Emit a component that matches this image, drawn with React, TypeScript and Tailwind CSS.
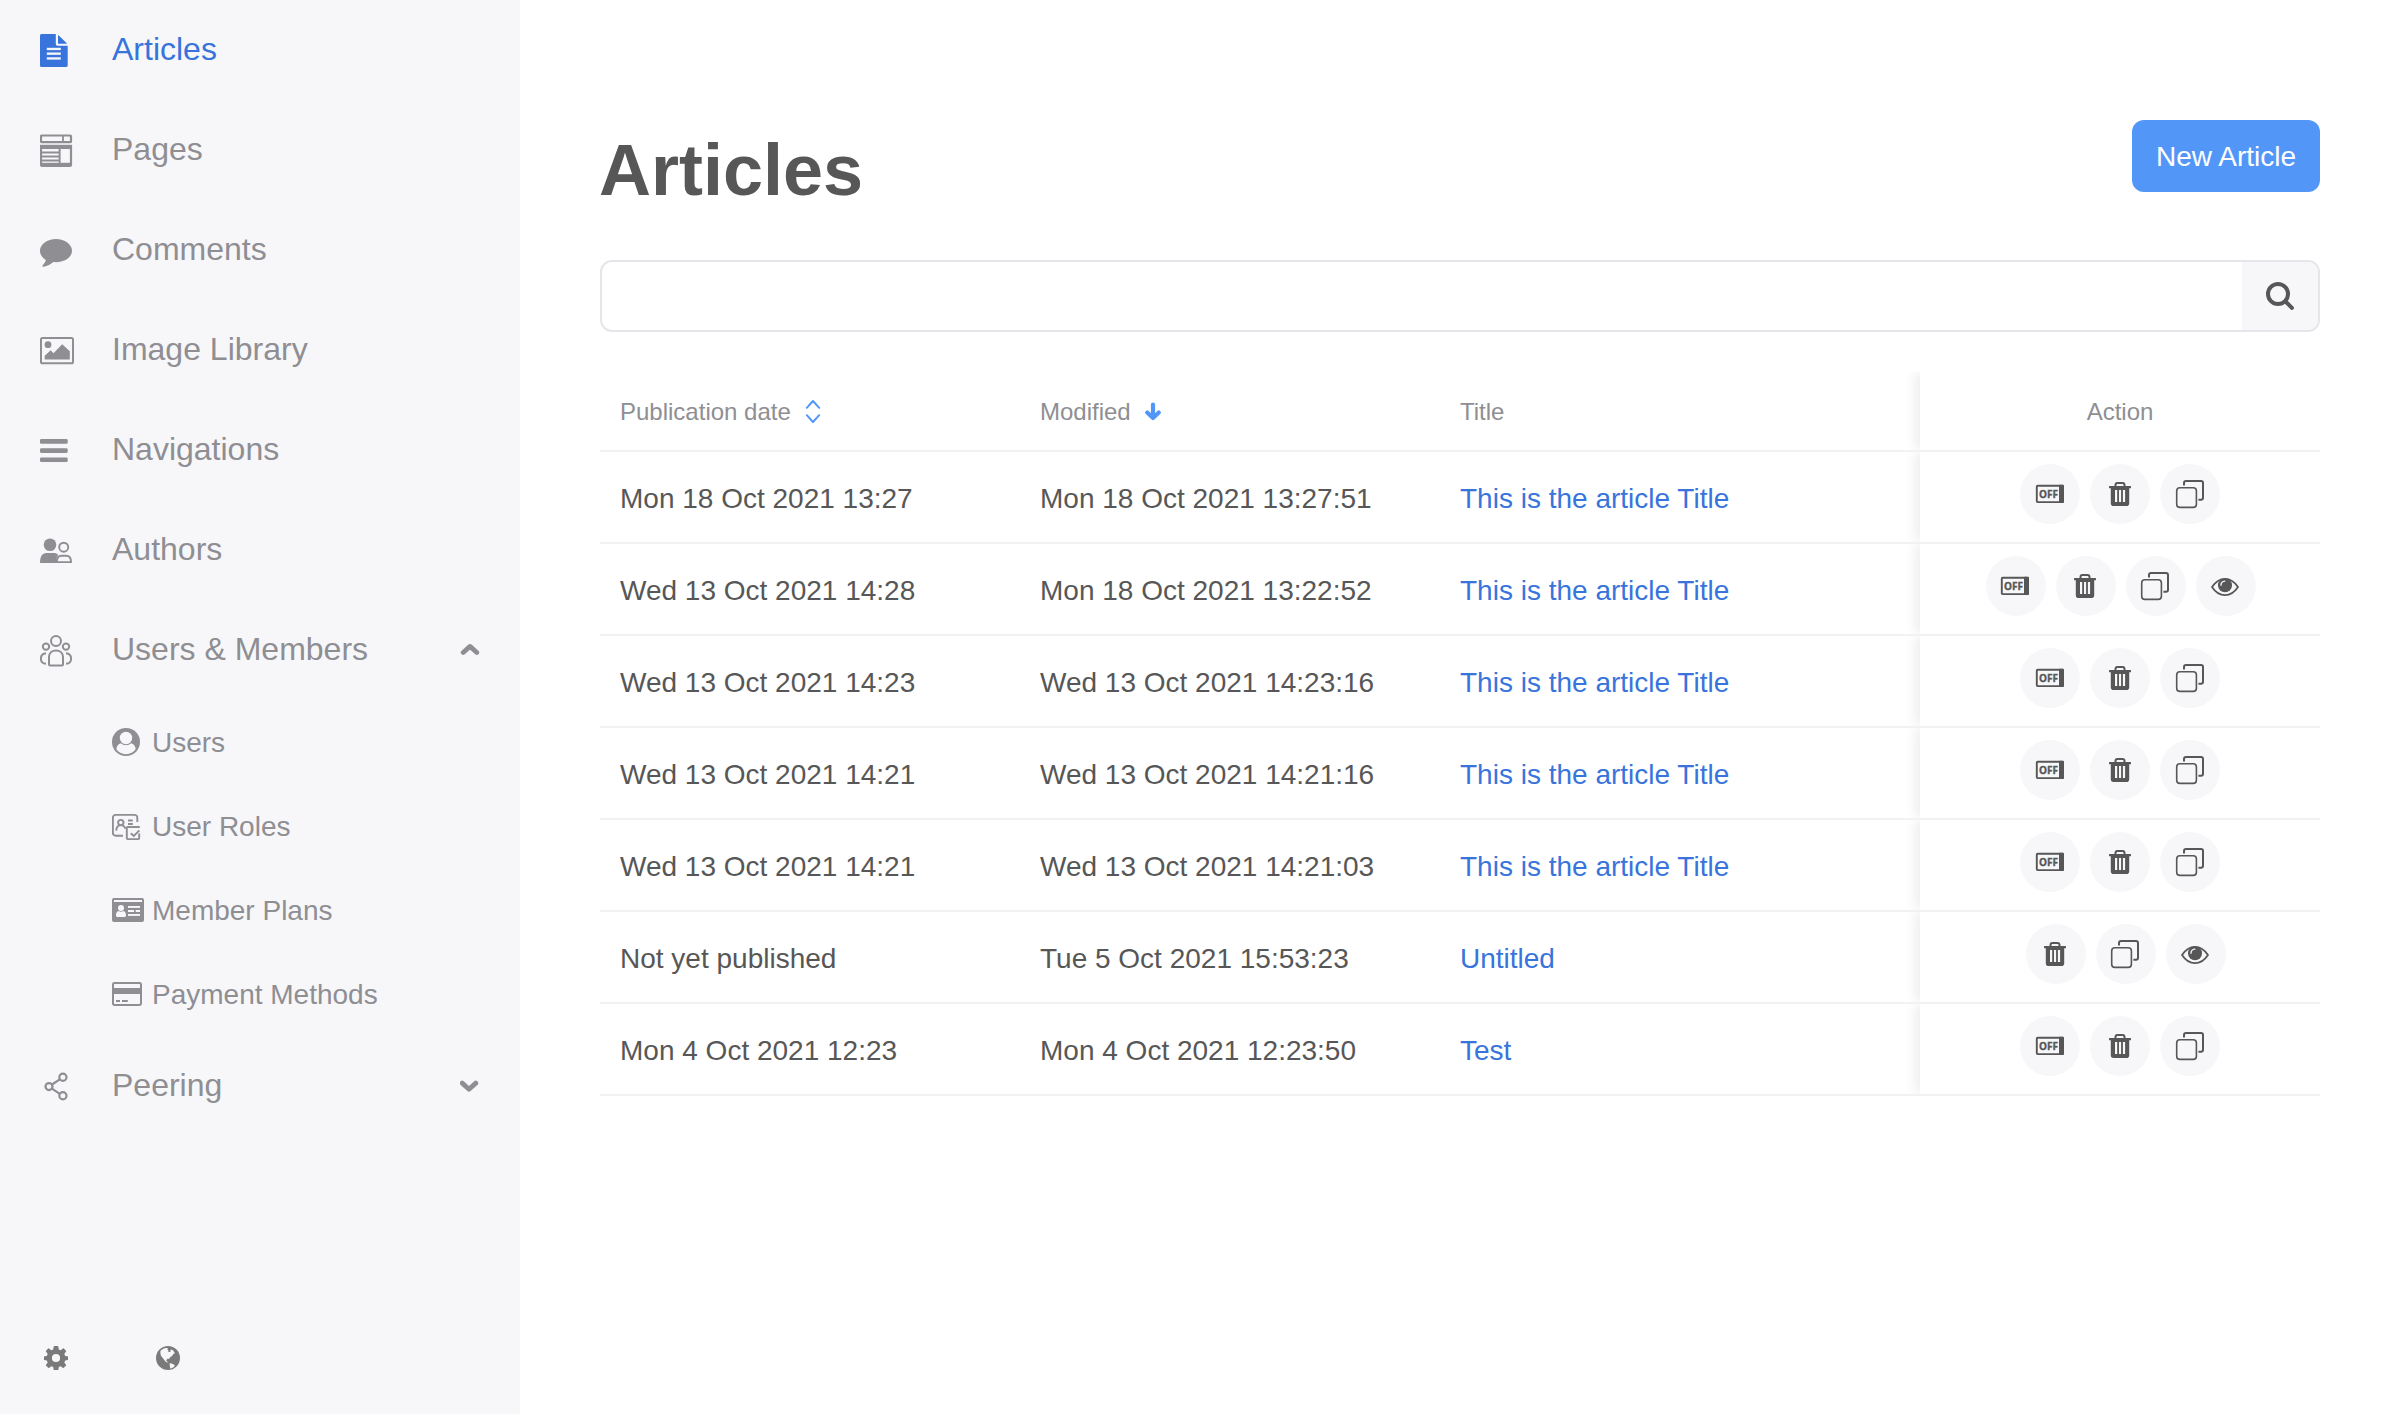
import type { ReactNode } from 'react';

type IconProps = { children: ReactNode; className?: string; size: string };

function Icon({ children, className = '', size }: IconProps) {
  return (
    <svg viewBox={size} className={`shrink-0 ${className}`} fill="currentColor" aria-hidden="true">
      {children}
    </svg>
  );
}

const line = { fill: 'none', stroke: 'currentColor' } as const;

/* Sidebar icons, drawn on a 36 unit grid */

const articleIcon = (
  <>
    <path d="M1.5 2h14.3v10a1.7 1.7 0 0 0 1.7 1.7H27.7v19.6A1.5 1.5 0 0 1 26.2 35H1.5A1.5 1.5 0 0 1 0 33.5V3.5A1.5 1.5 0 0 1 1.5 2z" />
    <path d="M18 3.2c.5.2.9.5 1.3.9l6.7 6.300c.4.4.7.8.9 1.300H18z" />
    <g fill="#f7f7fa">
      <rect x="6.800" y="15.800" width="14" height="2.300" />
      <rect x="6.800" y="20.500" width="14" height="2.300" />
      <rect x="6.800" y="25.300" width="14" height="2.300" />
    </g>
  </>
);

const pagesIcon = (
  <g {...line} strokeWidth="2.200">
    <rect x="1" y="3.500" width="30" height="6.700" rx="0.800" />
    <path d="M23 4v6" strokeWidth="1.800" />
    <path d="M1 13v20a.8.8 0 0 0 .8.8h28.400a.8.8 0 0 0 .8-.8V13" />
    <path d="M0 14.900h32" strokeWidth="4.200" />
    <path d="M1 32.500h30" strokeWidth="3.400" />
    <path d="M19.600 15v17M1 20.500h18M1 24.500h18M1 28.500h18" strokeWidth="2" />
  </g>
);

const commentIcon = (
  <path d="M16 7c8.800 0 16 5.200 16 11.700S24.800 30.200 16 30.200c-.9 0-1.800 0-2.600-.1-2.600 2.200-6 4.200-9.700 4.700-1 .1-1.900-.6-1-1.600 1.500-1.500 2.700-3 3.100-5.200C2.300 25.800 0 22.500 0 18.700 0 12.200 7.200 7 16 7z" />
);

const imageIcon = (
  <>
    <rect x="1" y="6" width="32" height="25.300" rx="1.600" {...line} strokeWidth="2" />
    <circle cx="8" cy="12.700" r="3.400" />
    <path d="M4.700 27.600v-3.800l6-5.600 2.800 3 8.700-9 7.600 7v8.400z" />
  </>
);

const barsIcon = (
  <>
    <rect y="7" width="27.700" height="4.700" rx="1.300" />
    <rect y="16.200" width="27.700" height="4.700" rx="1.300" />
    <rect y="25.400" width="27.700" height="4.700" rx="1.300" />
  </>
);

const authorsIcon = (
  <>
    <circle cx="10" cy="12.700" r="6.300" />
    <path d="M0 31c0-6.500 2.200-10 6.500-10h7c2 0 3.600.6 4.700 1.800-1.300 1.500-2 4-2 8.200z" />
    <circle cx="23.700" cy="15.200" r="4.500" {...line} strokeWidth="1.900" />
    <path d="M16.800 30.100c0-4.400 1.600-6.300 4.700-6.300h4.800c3.100 0 4.700 1.900 4.700 6.300z" {...line} strokeWidth="1.900" />
  </>
);

const membersIcon = (
  <g {...line} strokeWidth="2">
    <circle cx="16" cy="8.900" r="5" />
    <circle cx="6" cy="14.600" r="3.200" />
    <circle cx="26" cy="14.600" r="3.200" />
    <path d="M10 33.400c-.6 0-1-.4-1-1V25c0-4 3-6.500 7-6.500s7 2.500 7 6.500v7.400c0 .6-.4 1-1 1z" />
    <path d="M6 21.300C3 21.600.9 23.500.9 26.700c0 2.700 1.800 4.800 5.100 5.100M26 21.300c3 .3 5.100 2.200 5.100 5.400 0 2.700-1.800 4.800-5.100 5.100" />
  </g>
);

const shareIcon = (
  <g {...line} strokeWidth="2.200">
    <circle cx="9" cy="18.600" r="3.500" />
    <circle cx="22.900" cy="9.300" r="3.600" />
    <circle cx="22.900" cy="27.800" r="3.600" />
    <path d="M12 16.500l7.800-5.200M12 20.600l7.800 5.200" />
  </g>
);

/* Icons of the nested entries, drawn on a 40 x 32 grid */

const userIcon = (
  <>
    <circle cx="14" cy="16" r="14" />
    <g fill="#f7f7fa">
      <circle cx="14" cy="12" r="6.200" />
      <path d="M4.300 23c.5-2.900 1.900-5.300 4.600-5.800 1.400 1.300 3.100 2 5.100 2s3.700-.7 5.100-2c2.700.5 4.100 2.900 4.600 5.800-2 3.200-5.500 5.200-9.700 5.200S6.300 26.200 4.300 23z" />
    </g>
  </>
);

const rolesIcon = (
  <g {...line} strokeWidth="1.900">
    <path d="M11 25.700H3.600A2.700 2.700 0 0 1 .9 23V7.600a2.700 2.700 0 0 1 2.700-2.700h19a2.700 2.700 0 0 1 2.700 2.700V12" />
    <circle cx="8.800" cy="12.600" r="2.700" />
    <path d="M4.200 20.600c.2-2.900 1.400-4.700 3.300-5.200M10.300 15.400c1.900.5 2.600 1.700 3.200 3.200" />
    <path d="M16 10.500h4.800M16 14h4.800" />
    <path d="M27.800 17H15.600c-.5 0-.8.3-.8.8v10.500c0 .5.3.8.8.8h10.800c.5 0 .8-.3.800-.8V23.500" />
    <path d="M18.800 23.200l3 2.800 5.600-5.600" />
  </g>
);

const plansIcon = (
  <>
    <path
      fillRule="evenodd"
      d="M2 4h28a2 2 0 0 1 2 2v20a2 2 0 0 1-2 2H2a2 2 0 0 1-2-2V6a2 2 0 0 1 2-2zm0 2v2h28V6z"
    />
    <g fill="#f7f7fa">
      <circle cx="9" cy="14" r="3" />
      <path d="M4 21.500c0-2.600.8-4.300 2.700-4.600.7.5 1.400.8 2.300.8s1.600-.3 2.300-.8c1.900.3 2.700 2 2.700 4.600 0 .9-.6 1.500-1.500 1.500h-7C4.600 23 4 22.400 4 21.500z" />
      <rect x="16" y="12" width="12" height="1.900" />
      <path d="M16 16h6v1.900h-6zM23.700 16H28v1.900h-4.300z" />
      <rect x="16" y="20" width="12" height="1.900" />
    </g>
  </>
);

const paymentIcon = (
  <>
    <rect x="1" y="5" width="28" height="22" rx="1.400" {...line} strokeWidth="2" />
    <path d="M1 10h28v6H1zM4 22h4v1.900H4zM10 22h5.800v1.900H10z" />
  </>
);

type NavItem = { label: string; icon: ReactNode; active?: boolean; toggle?: 'up' | 'down'; children?: { label: string; icon: ReactNode }[] };

const nav: NavItem[] = [
  { label: 'Articles', icon: articleIcon, active: true },
  { label: 'Pages', icon: pagesIcon },
  { label: 'Comments', icon: commentIcon },
  { label: 'Image Library', icon: imageIcon },
  { label: 'Navigations', icon: barsIcon },
  { label: 'Authors', icon: authorsIcon },
  {
    label: 'Users & Members',
    icon: membersIcon,
    toggle: 'up',
    children: [
      { label: 'Users', icon: userIcon },
      { label: 'User Roles', icon: rolesIcon },
      { label: 'Member Plans', icon: plansIcon },
      { label: 'Payment Methods', icon: paymentIcon },
    ],
  },
  { label: 'Peering', icon: shareIcon, toggle: 'down' },
];

function Toggle({ direction }: { direction: 'up' | 'down' }) {
  return (
    <Icon size="0 0 20 14" className="h-[14px] w-5">
      <path
        d={direction === 'up' ? 'M3.200 9.500L10 3.400l6.800 6.100' : 'M2.200 4.100L9 10.200l6.800-6.100'}
        {...line}
        strokeWidth="4.800"
        strokeLinecap="round"
        strokeLinejoin="round"
      />
    </Icon>
  );
}

function Sidebar() {
  return (
    <aside className="flex w-[520px] shrink-0 flex-col justify-between bg-[#f7f7fa] text-[#8e8e93]">
      <nav>
        {nav.map((item) => (
          <div key={item.label}>
            <a className={`flex h-[100px] items-center pl-10 pr-10 ${item.active ? 'text-[#3874db]' : ''}`}>
              <Icon size="0 0 36 36" className="mr-9 size-9">
                {item.icon}
              </Icon>
              <span className="flex-1 pb-0.5 text-[32px] leading-10">{item.label}</span>
              {item.toggle && <Toggle direction={item.toggle} />}
            </a>
            {item.children?.map((child) => (
              <a key={child.label} className="flex h-[84px] items-center pl-28 text-[28px] leading-8">
                <Icon size="0 0 40 32" className="h-8 w-10">
                  {child.icon}
                </Icon>
                <span className="pt-0.5">{child.label}</span>
              </a>
            ))}
          </div>
        ))}
      </nav>
      <footer className="flex gap-[88px] pb-11 pl-11 text-[#7a7a7a]">
        <Icon size="0 0 24 24" className="size-6">
          <path
            fillRule="evenodd"
            d="M10.300 0h3.400c.3 0 .6.200.6.500l.5 2.900 1.900.8 2.300-1.700c.3-.2.600-.2.800.1l2.200 2.200c.2.200.2.500 0 .8l-1.700 2.300.9 2 2.400.4c.3 0 .4.300.4.600v2.600c0 .3-.1.600-.4.600l-2.400.4-.9 2 1.700 2.300c.2.300.2.600 0 .8l-2.200 2.200c-.2.200-.5.300-.8.100l-2.300-1.700-1.900.8-.5 2.900c0 .3-.3.500-.6.500h-3.400c-.3 0-.6-.2-.6-.5l-.5-2.900-1.900-.8L5 21.900c-.3.200-.6.200-.8-.1L2 19.600c-.2-.2-.2-.5 0-.8l1.700-2.300-.9-2-2.400-.4c-.3 0-.4-.3-.4-.6v-2.600c0-.3.100-.6.400-.6l2.400-.4.9-2L2 5.600c-.2-.3-.2-.6 0-.8l2.200-2.200c.2-.3.500-.3.800-.1l2.300 1.700 1.900-.8.5-2.900c0-.3.300-.5.600-.5zM12 7.900a4.100 4.100 0 1 0 0 8.200 4.100 4.100 0 0 0 0-8.200z"
          />
        </Icon>
        <Icon size="0 0 24 24" className="size-6">
          <circle cx="12" cy="12" r="12" />
          <g fill="#f7f7fa">
            <path d="M4.600 4.600C6 3.300 7.800 2.300 10 2l2.200.2-1 1.200 1.400.6-.8 1.200 1.400.9 1.600-.6-.5-1.400 1.400-.7 1.700 1.400 1.500 2.400-1.600.9-1.200 1.800-1.800 1-1 1.800-1.900.1-1.200 1.600 1.400 1.600-.3.800-1.800-1.200-2-2.500L5 9.800c-.6-1.700-.8-3.500-.4-5.200z" />
            <path d="M13.500 17.200l2.200.2 3 1.600-.7 2-3.700 1.800-.3-1.700z" />
          </g>
        </Icon>
      </footer>
    </aside>
  );
}

/* Row action icons, drawn on the full 60 unit button */

type Action = 'unpublish' | 'delete' | 'duplicate' | 'preview';

const actionIcons: Record<Action, ReactNode> = {
  unpublish: (
    <>
      <rect x="16.800" y="21.700" width="26" height="16.400" rx="0.800" {...line} strokeWidth="1.900" />
      <rect x="39" y="20.700" width="5" height="18.300" rx="0.800" />
      <text
        x="19"
        y="33.700"
        textLength="19"
        lengthAdjust="spacingAndGlyphs"
        stroke="currentColor"
        strokeWidth="0.350"
        className="font-['Open_Sans',sans-serif] text-[10.200px] font-bold"
      >
        OFF
      </text>
    </>
  ),
  delete: (
    <>
      <path d="M25.500 22.500v-1.600c0-1.100.8-1.900 1.900-1.900h5.200c1.100 0 1.900.8 1.900 1.900v1.600" {...line} strokeWidth="2" />
      <rect x="19" y="22" width="22" height="2.200" rx="0.500" />
      <path
        fillRule="evenodd"
        d="M20.800 24h18.400v15.200a2.800 2.800 0 0 1-2.800 2.800H23.600a2.800 2.800 0 0 1-2.800-2.800zM25 26v12h2.200V26zM29 26v12h2.100V26zM32.900 26v12h2.200V26z"
      />
    </>
  ),
  duplicate: (
    <g {...line}>
      <rect x="16.700" y="23.700" width="19.700" height="19.700" rx="3.200" strokeWidth="1.600" />
      <path d="M24 21.500v-2.500a2 2 0 0 1 2-2h15a2 2 0 0 1 2 2v14.800a2 2 0 0 1-2 2h-2.600" strokeWidth="2" />
    </g>
  ),
  preview: (
    <>
      <path d="M17 31c3.500-5.300 7.700-8.200 13-8.200S39.500 25.700 43 31c-3.500 5.300-7.700 8.200-13 8.200S20.500 36.300 17 31z" {...line} strokeWidth="1.800" strokeLinejoin="round" />
      <circle cx="30" cy="29.200" r="7" />
      <path d="M26 29.300c0-2.300 1.500-3.900 3.800-4.100" fill="none" stroke="#f7f7fa" strokeWidth="1.300" strokeLinecap="round" />
    </>
  ),
};

type Row = { published: string; modified: string; title: string; actions: Action[]; offset?: string };

const standard: Action[] = ['unpublish', 'delete', 'duplicate'];

const rows: Row[] = [
  { published: 'Mon 18 Oct 2021 13:27', modified: 'Mon 18 Oct 2021 13:27:51', title: 'This is the article Title', actions: standard },
  {
    published: 'Wed 13 Oct 2021 14:28',
    modified: 'Mon 18 Oct 2021 13:22:52',
    title: 'This is the article Title',
    actions: ['unpublish', 'delete', 'duplicate', 'preview'],
    offset: 'pl-0.5',
  },
  { published: 'Wed 13 Oct 2021 14:23', modified: 'Wed 13 Oct 2021 14:23:16', title: 'This is the article Title', actions: standard },
  { published: 'Wed 13 Oct 2021 14:21', modified: 'Wed 13 Oct 2021 14:21:16', title: 'This is the article Title', actions: standard },
  { published: 'Wed 13 Oct 2021 14:21', modified: 'Wed 13 Oct 2021 14:21:03', title: 'This is the article Title', actions: standard },
  { published: 'Not yet published', modified: 'Tue 5 Oct 2021 15:53:23', title: 'Untitled', actions: ['delete', 'duplicate', 'preview'], offset: 'pl-3' },
  { published: 'Mon 4 Oct 2021 12:23', modified: 'Mon 4 Oct 2021 12:23:50', title: 'Test', actions: standard },
];

const columns = 'grid grid-cols-[420px_420px_480px_400px] overflow-hidden border-b-2 border-[#f2f2f2]';
const actionCell = 'flex justify-center shadow-[-4px_0_12px_rgba(9,9,9,0.08)]';

function ArticleTable() {
  return (
    <section className="mt-10">
      <div className={`${columns} h-20 text-[24px] leading-7 text-[#8e8e93]`}>
        <div className="flex items-center pl-5 pt-0.5">
          Publication date
          <Icon size="0 0 16 26" className="ml-3.5 h-[26px] w-4">
            <path d="M1.800 8.800L8 2l6.200 6.800M1.800 16.200L8 23l6.200-6.800" fill="none" stroke="#5297f8" strokeWidth="2" strokeLinecap="round" strokeLinejoin="round" />
          </Icon>
        </div>
        <div className="flex items-center pl-5 pt-0.5">
          Modified
          <Icon size="0 0 18 20" className="ml-[13px] h-5 w-[18px]">
            <path d="M9 2.600v13M3.200 10.600L9 16.100l5.800-5.500" fill="none" stroke="#5297f8" strokeWidth="4.200" strokeLinecap="round" strokeLinejoin="round" />
          </Icon>
        </div>
        <div className="flex items-center pl-5 pt-0.5">Title</div>
        <div className={`${actionCell} items-center pt-0.5`}>Action</div>
      </div>
      {rows.map((row, index) => (
        <div key={index} className={`${columns} h-[92px] text-[28px] leading-8 text-[#575757]`}>
          <div className="flex items-center pl-5 pt-[3px]">{row.published}</div>
          <div className="flex items-center pl-5 pt-[3px]">{row.modified}</div>
          <a className="flex items-center pl-5 pt-[3px] text-[#3874db]">{row.title}</a>
          <div className={`${actionCell} ${row.offset ?? ''} gap-2.5 pt-3`}>
            {row.actions.map((action) => (
              <button key={action} className="size-[60px] rounded-full bg-[#f7f7fa]">
                <Icon size="0 0 60 60" className={row.offset ? '-ml-px size-[60px]' : 'size-[60px]'}>
                  {actionIcons[action]}
                </Icon>
              </button>
            ))}
          </div>
        </div>
      ))}
    </section>
  );
}

export default function App() {
  return (
    <div className="flex h-[1414px] w-[2400px] bg-white font-['Liberation_Sans',Arial,sans-serif]">
      <Sidebar />
      <main className="flex-1 px-20 pt-[120px]">
        <header className="flex h-[98px] items-start justify-between">
          <h1 className="-ml-px pt-px text-[72px] font-bold leading-[98px] text-[#575757]">Articles</h1>
          <button className="h-[72px] w-[188px] rounded-xl bg-[#5297f8] pt-0.5 text-[28px] text-white">New Article</button>
        </header>
        <div className="mt-[42px] flex h-[72px] overflow-hidden rounded-xl border-2 border-[#e5e5ea]">
          <input className="flex-1 px-5 text-[28px] text-[#575757] outline-none" />
          <button className="flex w-[76px] items-center justify-center bg-[#f7f7fa] text-[#575757]">
            <Icon size="0 0 28 28" className="size-7">
              <circle cx="12" cy="12" r="10" {...line} strokeWidth="4" />
              <path d="M19.500 19.500l6.400 6.400" {...line} strokeWidth="4" strokeLinecap="round" />
            </Icon>
          </button>
        </div>
        <ArticleTable />
      </main>
    </div>
  );
}
